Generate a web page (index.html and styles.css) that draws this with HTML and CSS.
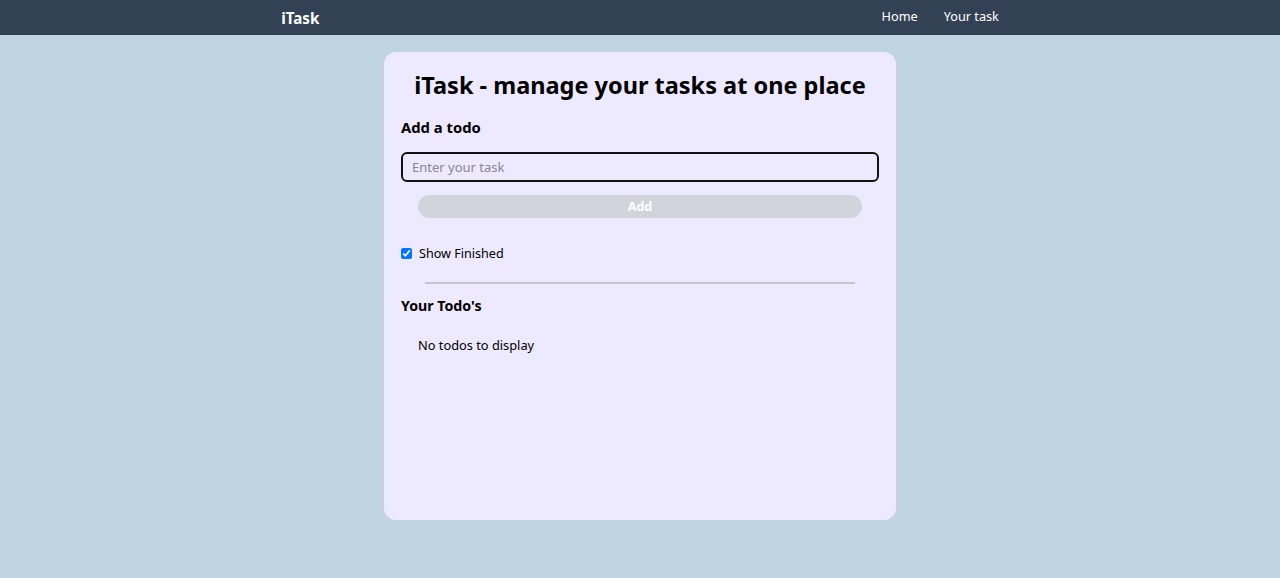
FILE: index.html
```html
<!DOCTYPE html>
<html lang="en">
<head>
<meta charset="utf-8">
<title>iTask</title>
<link rel="stylesheet" href="styles.css">
</head>
<body>
<nav class="navbar">
  <div class="logo">iTask</div>
  <ul class="nav-links">
    <li>Home</li>
    <li>Your task</li>
  </ul>
</nav>
<main class="card">
  <h1 class="title">iTask - manage your tasks at one place</h1>
  <section class="add-todo">
    <h2 class="section-title">Add a todo</h2>
    <input class="task-input" type="text" placeholder="Enter your task">
    <button class="add-btn" disabled>Add</button>
  </section>
  <label class="finished"><input type="checkbox" checked> Show Finished</label>
  <div class="divider"></div>
  <h2 class="section-title todos-title">Your Todo's</h2>
  <div class="todos">
    <div class="empty">No todos to display</div>
  </div>
</main>
</body>
</html>
```
FILE: styles.css
```css
* { box-sizing: border-box; }
html, body { margin: 0; padding: 0; }
body {
  background: #c1d4e2;
  font-family: "Noto Sans", "Open Sans", sans-serif;
  color: #000;
  min-height: 578px;
}
.navbar {
  display: flex;
  justify-content: space-around;
  align-items: center;
  height: 35px;
  background: #334155;
  color: #fff;
}
.logo {
  font-weight: 700;
  font-size: 15.2px;
}
.nav-links {
  display: flex;
  gap: 26px;
  list-style: none;
  margin: 0 0 3px;
  padding: 0;
  font-size: 12.7px;
}
.card {
  width: 512px;
  height: 468px;
  margin: 17px auto 0;
  background: #ede9fe;
  border-radius: 12px;
  padding: 17px;
  display: flex;
  flex-direction: column;
}
.title {
  margin: 0;
  text-align: center;
  font-size: 23.5px;
  font-weight: 700;
  line-height: 32px;
}
.add-todo {
  display: flex;
  flex-direction: column;
  margin-top: 14px;
}
.section-title {
  margin: 0;
  font-size: 14.8px;
  font-weight: 700;
  line-height: 24px;
}
.todos-title { font-size: 14.2px; }
.task-input {
  margin-top: 13px;
  height: 30px;
  width: 100%;
  border: 2px solid #111;
  border-radius: 6px;
  background: transparent;
  padding: 0 9px;
  font-family: inherit;
  font-size: 13px;
  outline: none;
}
.task-input::placeholder { color: #8a8494; }
.add-btn {
  margin: 13px 17px 0;
  height: 23px;
  border: none;
  border-radius: 999px;
  background: #d1d5db;
  color: #fff;
  font-family: inherit;
  font-weight: 700;
  font-size: 12.5px;
  padding: 0;
}
.finished {
  display: flex;
  align-items: center;
  gap: 7px;
  margin-top: 27px;
  font-size: 12.6px;
}
.finished input { margin: 0; width: 11px; height: 11px; }
.divider {
  width: 90%;
  height: 2px;
  background: #c7c3d3;
  margin: 20px auto 10px;
}
.todos { padding: 18px 17px; }
.empty { font-size: 12.8px; }
```
